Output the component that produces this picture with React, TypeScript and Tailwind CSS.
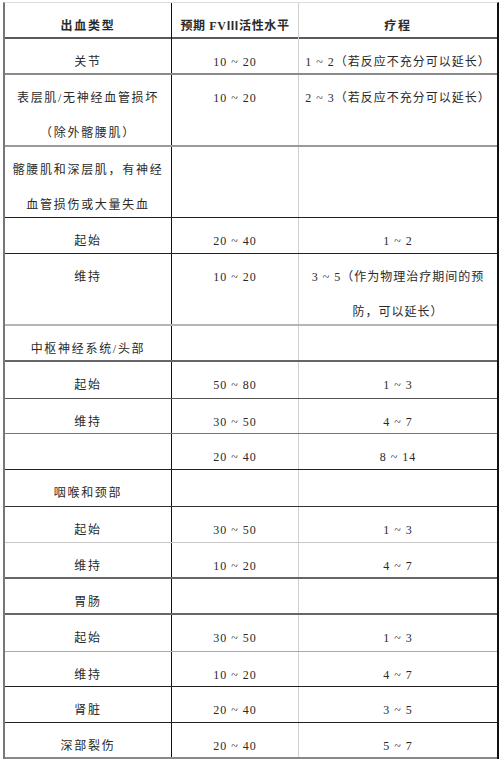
const rows: {
  a: string[];
  b?: string;
  c?: string[];
  h: number;
  line: string;
}[] = [
  { a: ['关节'], b: '10 ~ 20', c: ['1 ~ 2（若反应不充分可以延长）'], h: 36, line: 'border-b-2 border-[#8a8a8a]' },
  { a: ['表层肌/无神经血管损坏', '（除外髂腰肌）'], b: '10 ~ 20', c: ['2 ~ 3（若反应不充分可以延长）'], h: 72, line: 'border-b-2 border-[#9a9a9a]' },
  { a: ['髂腰肌和深层肌，有神经', '血管损伤或大量失血'], h: 71, line: 'border-b border-[#222]' },
  { a: ['起始'], b: '20 ~ 40', c: ['1 ~ 2'], h: 36, line: 'border-b border-[#222]' },
  { a: ['维持'], b: '10 ~ 20', c: ['3 ~ 5（作为物理治疗期间的预', '防，可以延长）'], h: 72, line: 'border-b-2 border-[#b5b5b5]' },
  { a: ['中枢神经系统/头部'], h: 36, line: 'border-b-2 border-[#666]' },
  { a: ['起始'], b: '50 ~ 80', c: ['1 ~ 3'], h: 37, line: 'border-b border-[#555]' },
  { a: ['维持'], b: '30 ~ 50', c: ['4 ~ 7'], h: 35, line: 'border-b border-[#777]' },
  { a: [''], b: '20 ~ 40', c: ['8 ~ 14'], h: 36, line: 'border-b border-[#222]' },
  { a: ['咽喉和颈部'], h: 37, line: 'border-b border-[#333]' },
  { a: ['起始'], b: '30 ~ 50', c: ['1 ~ 3'], h: 36, line: 'border-b border-[#c8c8c8]' },
  { a: ['维持'], b: '10 ~ 20', c: ['4 ~ 7'], h: 36, line: 'border-b-2 border-[#666]' },
  { a: ['胃肠'], h: 36, line: 'border-b-2 border-[#666]' },
  { a: ['起始'], b: '30 ~ 50', c: ['1 ~ 3'], h: 37, line: 'border-b border-[#aaa]' },
  { a: ['维持'], b: '10 ~ 20', c: ['4 ~ 7'], h: 35, line: 'border-b border-[#222]' },
  { a: ['肾脏'], b: '20 ~ 40', c: ['3 ~ 5'], h: 36, line: 'border-b border-[#222]' },
  { a: ['深部裂伤'], b: '20 ~ 40', c: ['5 ~ 7'], h: 36, line: 'border-b-2 border-[#888]' },
];

const Cell = ({ lines, className = '' }: { lines?: string[]; className?: string }) => (
  <div className={`flex flex-col items-center pt-[6px] leading-[35px] whitespace-nowrap ${className}`}>
    {(lines || []).map((t, i) => (
      <span key={i}>{t || '\u00a0'}</span>
    ))}
  </div>
);

export default function App() {
  return (
    <div className="w-[500px] h-[761px] bg-white pt-[2px] pl-[3px]">
      <div
        className="w-[496px] border-l-2 border-r-2 border-l-[#777] border-r-[#111] border-t border-t-[#ddd] text-[12px] text-[#2a2a2a] tracking-[1.7px]"
        style={{ fontFamily: '"Liberation Serif", "Noto Sans CJK SC", serif' }}
      >
        <div className="grid grid-cols-[167px_127px_198px] h-[36px] border-b-2 border-[#5a5a5a] font-bold">
          <Cell lines={['出血类型']} className="border-r border-[#111] pt-[6px]" />
          <Cell lines={['预期 FVⅢ活性水平']} className="border-r border-[#d0d0d0] pt-[6px] tracking-[0.6px]" />
          <Cell lines={['疗程']} className="pt-[6px]" />
        </div>
        {rows.map((r, i) => (
          <div
            key={i}
            className={`grid grid-cols-[167px_127px_198px] overflow-hidden ${r.line}`}
            style={{ height: r.h }}
          >
            <Cell lines={r.a} className="border-r border-[#111]" />
            <Cell lines={r.b ? [r.b] : []} className="border-r border-[#d0d0d0] tracking-[1px]" />
            <Cell lines={r.c} className="tracking-[1px]" />
          </div>
        ))}
      </div>
    </div>
  );
}
